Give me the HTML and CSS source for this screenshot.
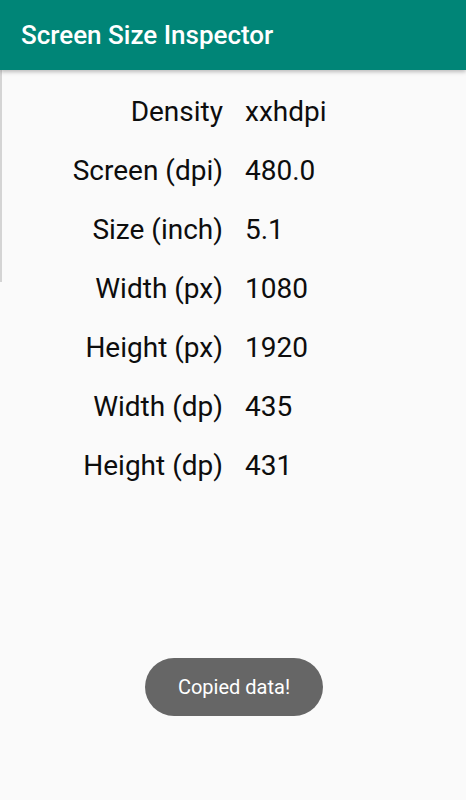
FILE: index.html
```html
<!DOCTYPE html>
<html>
<head>
  <title>Screen Size Inspector</title>
  <link rel="stylesheet" href="styles.css">
</head>
<body>

<div class="toolbar">Screen Size Inspector</div>

<div class="content">
  <div class="edge"></div>
  <div class="info">
    <div class="label">Density</div><div class="value">xxhdpi</div>
    <div class="label">Screen (dpi)</div><div class="value">480.0</div>
    <div class="label">Size (inch)</div><div class="value">5.1</div>
    <div class="label">Width (px)</div><div class="value">1080</div>
    <div class="label">Height (px)</div><div class="value">1920</div>
    <div class="label">Width (dp)</div><div class="value">435</div>
    <div class="label">Height (dp)</div><div class="value">431</div>
  </div>
</div>

<div class="toast">Copied data!</div>

</body>
</html>
```

FILE: styles.css
```css
body {
  margin: 0;
  font-family: Roboto, "Noto Sans", sans-serif;
  background-color: #fafafa;
  width: 466px;
  height: 800px;
  position: relative;
  overflow: hidden;
}
.toolbar {
  height: 70px;
  background-color: #008577;
  color: #fff;
  font-size: 26px;
  font-weight: 500;
  padding-left: 21px;
  line-height: 70px;
  box-shadow: 0 2px 4px rgba(0,0,0,0.25);
  position: relative;
}
.content {
  display: flex;
}
.edge {
  width: 2px;
  height: 212px;
  background-color: #d4d4d4;
  flex-shrink: 0;
}
.info {
  display: grid;
  grid-template-columns: 221px auto;
  column-gap: 22px;
  grid-auto-rows: 59px;
  padding-top: 23px;
  font-size: 28px;
  color: #0d0d0d;
  line-height: 38px;
}
.label {
  text-align: right;
}
.toast {
  position: absolute;
  left: 145px;
  top: 658px;
  width: 178px;
  height: 58px;
  border-radius: 29px;
  background-color: #666;
  color: #fff;
  font-size: 20px;
  text-align: center;
  line-height: 58px;
}
```
